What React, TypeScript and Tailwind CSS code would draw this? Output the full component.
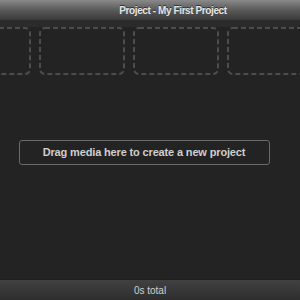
import React from "react";

function Slot() {
  return (
    <div className="relative w-[86px] h-[48px] shrink-0">
      <svg width="86" height="48" className="absolute inset-0">
        <rect x="1" y="1" width="84" height="46" rx="5" ry="5" fill="none" stroke="#4d4d4d" strokeWidth="2" strokeDasharray="5 3" />
      </svg>
    </div>
  );
}

export default function App() {
  return (
    <div
      className="w-[300px] h-[300px] flex flex-col bg-[#232323] overflow-hidden"
      style={{ fontFamily: '"Liberation Sans", Arial, sans-serif' }}
    >
      <div className="h-[20px] shrink-0 flex items-center justify-center pl-[46px] bg-gradient-to-b from-[#8a8a8a] via-[#5a5a5a] to-[#3a3a3a]">
        <span className="text-[10px] font-bold text-[#e6e6e6] tracking-[-0.4px] [text-shadow:0_-1px_0_#333]">
          Project - My First Project
        </span>
      </div>
      <div className="h-[7px] shrink-0 bg-[#2b2b2b]" />
      <div className="flex gap-[8px] ml-[-55px] shrink-0">
        <Slot />
        <Slot />
        <Slot />
        <Slot />
      </div>
      <div className="flex-1 flex flex-col items-center pt-[65px]">
        <div className="w-[251px] h-[25px] ml-[-12px] border border-[#6a6a6a] rounded-[3px] flex items-center justify-center">
          <span className="text-[11px] font-bold text-[#cfcfcf] tracking-[-0.15px]">
            Drag media here to create a new project
          </span>
        </div>
      </div>
      <div className="h-[21px] shrink-0 flex items-center justify-center bg-gradient-to-b from-[#414141] to-[#2e2e2e] border-t border-[#1e1e1e]">
        <span className="text-[10px] text-[#d0d0d0]">0s total</span>
      </div>
    </div>
  );
}
